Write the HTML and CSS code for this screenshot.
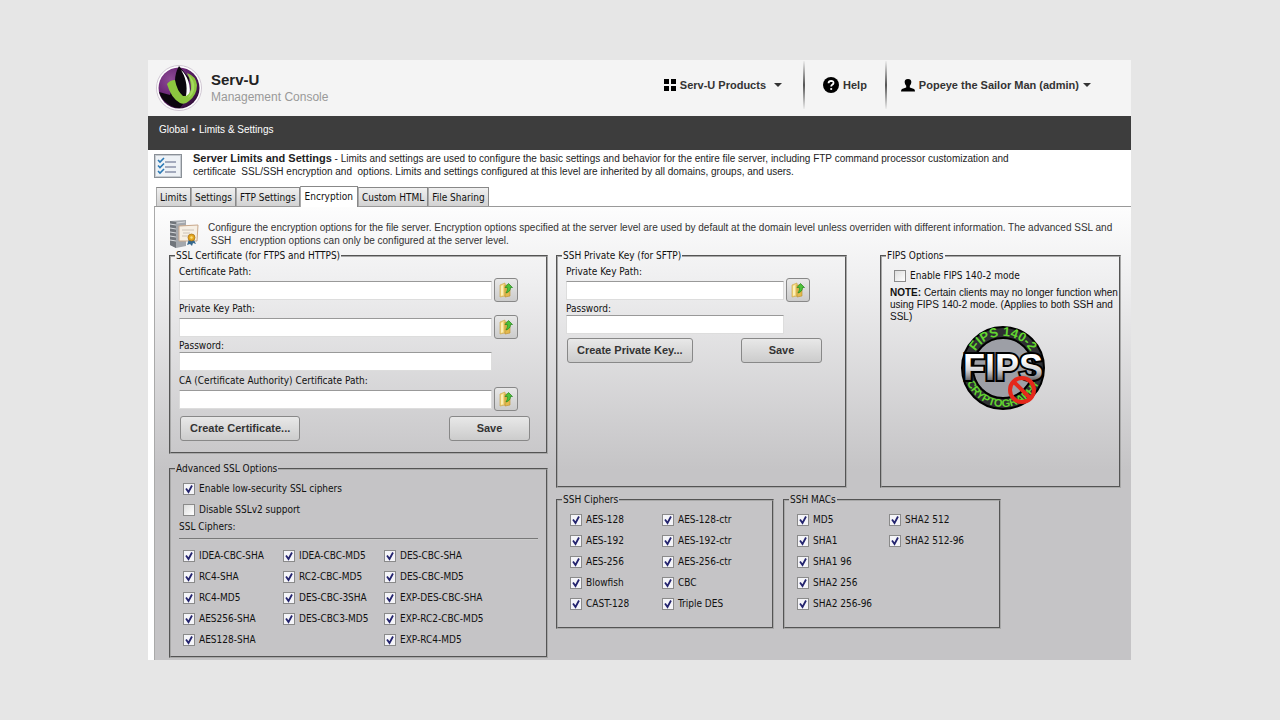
FILE: index.html
```html
<!DOCTYPE html>
<html lang="en">
<head>
    <meta charset="UTF-8">
    <meta name="viewport" content="width=device-width, initial-scale=1.0">
    <title>Serv-U Management Console</title>
    <link rel="stylesheet" href="styles.css">
</head>
<body>
    <!-- shared folder icon for the browse buttons -->
    <svg class="sprite" width="0" height="0" aria-hidden="true">
        <symbol id="folder" viewBox="0 0 16 16">
            <path d="M2 3l5-2v13l-5 1z" fill="#f3d77c" stroke="#c9a244" stroke-width=".6"/>
            <path d="M7 3h5v11l-5 1z" fill="#e3b94e" stroke="#b88d2c" stroke-width=".6"/>
            <path d="M3 4l2-1v10l-2 1z" fill="#fbeeb5"/>
            <path d="M10.500 1.500L14.500 5.500H12.500C12.500 8.500 11 10 8 11C9 9 9.500 8 9.300 5.500H7z" fill="#4cc23a" stroke="#23851c" stroke-width=".7"/>
        </symbol>
    </svg>

    <div class="console">
        <header class="header">
            <div class="brand">
                <svg class="logo" viewBox="0 0 46 46" aria-hidden="true">
                    <defs>
                        <radialGradient id="purple" cx=".3" cy=".3" r=".75">
                            <stop offset="0" stop-color="#8f4c96"/>
                            <stop offset=".5" stop-color="#6b2877"/>
                            <stop offset="1" stop-color="#37103f"/>
                        </radialGradient>
                    </defs>
                    <circle cx="23" cy="23" r="22.500" fill="#fff" stroke="#cfc6d2"/>
                    <circle cx="23" cy="23" r="20.500" fill="url(#purple)"/>
                    <path d="M3 27C5 33 8 36 12 39Q17 43 24 43L31 34L33 13Q28 7 23 1Q19 8 19 16L14 30z" fill="#0c060e"/>
                    <path d="M25 5C31 10 36 20 33 34L30 31C32 20 29 11 25 5z" fill="#fff"/>
                    <path d="M11 19Q14 15 19 15Q21 26 27 31Q33 32 35 24Q35 15 31 8Q40 11 41 20Q41 30 33 36Q29 40 24 38Q15 33 11 19z" fill="#8cc63f"/>
                    <path d="M31 9Q40 19 32 33Q36 31 38 25Q40 15 31 9z" fill="#a6d860"/>
                </svg>
                <div>
                    <h1 class="title">Serv-U</h1>
                    <p class="subtitle">Management Console</p>
                </div>
            </div>
            <nav class="menu">
                <button class="menu-item products" type="button">
                    <svg width="12" height="12" viewBox="0 0 12 12" aria-hidden="true"><path d="M0 0h5v5H0zM7 0h5v5H7zM0 7h5v5H0zM7 7h5v5H7z"/></svg>
                    Serv-U Products <span class="caret"></span>
                </button>
                <a class="menu-item help" href="#">
                    <svg width="16" height="16" viewBox="0 0 16 16" aria-hidden="true">
                        <circle cx="8" cy="8" r="8"/>
                        <path d="M5.500 6.200Q5.700 3.800 8.100 3.800Q10.600 3.900 10.500 6Q10.300 7.300 8.900 8Q8.200 8.500 8.200 9.600" fill="none" stroke="#fff" stroke-width="1.800"/>
                        <circle cx="8.200" cy="12" r="1.100" fill="#fff"/>
                    </svg>
                    Help
                </a>
                <button class="menu-item user" type="button">
                    <svg width="14" height="13" viewBox="0 0 14 13" aria-hidden="true"><path d="M7 0C9.600 0 10.600 1.600 10.300 3.500C10.100 5 9.300 6 8.800 6.800V8.500L13 10Q14 10.500 14 12.500H0Q0 10.500 1 10L5.200 8.500V6.800C4.700 6 3.900 5 3.700 3.500C3.400 1.600 4.400 0 7 0z"/></svg>
                    Popeye the Sailor Man (admin) <span class="caret"></span>
                </button>
            </nav>
        </header>

        <div class="crumbs"><a href="#">Global</a> <span>•</span> <a href="#">Limits &amp; Settings</a></div>

        <div class="intro">
            <svg width="28" height="24" viewBox="0 0 28 24" aria-hidden="true">
                <rect x=".5" y=".5" width="27" height="23" fill="#eef2f6" stroke="#8a9097"/>
                <rect x="1.500" y="1.500" width="25" height="21" fill="none" stroke="#c7ccd2"/>
                <path d="M11 8h11M11 13h11M11 18h11" stroke="#8a93ab" stroke-width="1.500"/>
                <path d="M4 6l2 2l4-4M4 11.500l2 2l4-4M4 17l2 2l4-4" fill="none" stroke="#2b79b5" stroke-width="1.600"/>
            </svg>
            <p><b>Server Limits and Settings</b> - Limits and settings are used to configure the basic settings and behavior for the entire file server, including FTP command processor customization and<br>
            certificate &nbsp;SSL/SSH encryption and &nbsp;options. Limits and settings configured at this level are inherited by all domains, groups, and users.</p>
        </div>

        <div class="tabs" role="tablist">
            <button class="tab" type="button" role="tab">Limits</button>
            <button class="tab" type="button" role="tab">Settings</button>
            <button class="tab" type="button" role="tab">FTP Settings</button>
            <button class="tab active" type="button" role="tab" aria-selected="true">Encryption</button>
            <button class="tab" type="button" role="tab">Custom HTML</button>
            <button class="tab" type="button" role="tab">File Sharing</button>
        </div>

        <main class="panel">
            <div class="note">
                <svg width="30" height="30" viewBox="0 0 30 30" aria-hidden="true">
                    <path d="M1 2L17 1V27L7 29L1 26z" fill="#a4a8ad"/>
                    <path d="M1 2L7 3V29L1 26z" fill="#70757b"/>
                    <path d="M1 5l6 1M1 9l6 1M1 13l6 1M1 17l6 1M1 21l6 1M8 4l8-1" stroke="#d9dcdf"/>
                    <path d="M10 7L29 6L28 22L10 22z" fill="#f6efe4" stroke="#c9a88a"/>
                    <path d="M13 11h12M14 14h7M13 17h6" stroke="#c3b8ac" stroke-width=".8"/>
                    <path d="M20 20L18 26L21 25L23 27L24 24L27 25L24 19z" fill="#36688d"/>
                    <circle cx="22.500" cy="18.500" r="3.500" fill="#e3a51f" stroke="#a06c10" stroke-width=".7"/>
                    <circle cx="22.500" cy="18.500" r="1.200" fill="#f9df7c"/>
                </svg>
                <p>Configure the encryption options for the file server. Encryption options specified at the server level are used by default at the domain level unless overriden with different information. The advanced SSL and<br>
                &nbsp;SSH &nbsp; encryption options can only be configured at the server level.</p>
            </div>

            <div class="columns">
                <div class="column">
                    <fieldset class="group">
                        <legend>SSL Certificate (for FTPS and HTTPS)</legend>
                        <label for="certPath">Certificate Path:</label>
                        <div class="path">
                            <input type="text" id="certPath">
                            <button class="browse" type="button" aria-label="Browse"><svg width="16" height="16"><use href="#folder"/></svg></button>
                        </div>
                        <label for="keyPath">Private Key Path:</label>
                        <div class="path">
                            <input type="text" id="keyPath">
                            <button class="browse" type="button" aria-label="Browse"><svg width="16" height="16"><use href="#folder"/></svg></button>
                        </div>
                        <label for="certPass">Password:</label>
                        <div class="path no-browse spaced">
                            <input type="password" id="certPass">
                        </div>
                        <label for="caPath">CA (Certificate Authority) Certificate Path:</label>
                        <div class="path">
                            <input type="text" id="caPath">
                            <button class="browse" type="button" aria-label="Browse"><svg width="16" height="16"><use href="#folder"/></svg></button>
                        </div>
                        <div class="actions">
                            <button class="btn" type="button">Create Certificate...</button>
                            <button class="btn save" type="button">Save</button>
                        </div>
                    </fieldset>

                    <fieldset class="group advanced">
                        <legend>Advanced SSL Options</legend>
                        <label class="check"><input type="checkbox" checked>Enable low-security SSL ciphers</label>
                        <label class="check"><input type="checkbox">Disable SSLv2 support</label>
                        <p class="ciphers-title">SSL Ciphers:</p>
                        <div class="checks ssl">
                            <div>
                                <label class="check"><input type="checkbox" checked>IDEA-CBC-SHA</label>
                                <label class="check"><input type="checkbox" checked>RC4-SHA</label>
                                <label class="check"><input type="checkbox" checked>RC4-MD5</label>
                                <label class="check"><input type="checkbox" checked>AES256-SHA</label>
                                <label class="check"><input type="checkbox" checked>AES128-SHA</label>
                            </div>
                            <div>
                                <label class="check"><input type="checkbox" checked>IDEA-CBC-MD5</label>
                                <label class="check"><input type="checkbox" checked>RC2-CBC-MD5</label>
                                <label class="check"><input type="checkbox" checked>DES-CBC-3SHA</label>
                                <label class="check"><input type="checkbox" checked>DES-CBC3-MD5</label>
                            </div>
                            <div>
                                <label class="check"><input type="checkbox" checked>DES-CBC-SHA</label>
                                <label class="check"><input type="checkbox" checked>DES-CBC-MD5</label>
                                <label class="check"><input type="checkbox" checked>EXP-DES-CBC-SHA</label>
                                <label class="check"><input type="checkbox" checked>EXP-RC2-CBC-MD5</label>
                                <label class="check"><input type="checkbox" checked>EXP-RC4-MD5</label>
                            </div>
                        </div>
                    </fieldset>
                </div>

                <div class="column">
                    <div class="row top-row">
                        <fieldset class="group ssh-key">
                            <legend>SSH Private Key (for SFTP)</legend>
                            <label for="sshPath">Private Key Path:</label>
                            <div class="path">
                                <input type="text" id="sshPath">
                                <button class="browse" type="button" aria-label="Browse"><svg width="16" height="16"><use href="#folder"/></svg></button>
                            </div>
                            <label for="sshPass">Password:</label>
                            <div class="path no-browse">
                                <input type="password" id="sshPass">
                            </div>
                            <div class="actions">
                                <button class="btn" type="button">Create Private Key...</button>
                                <button class="btn save" type="button">Save</button>
                            </div>
                        </fieldset>

                        <fieldset class="group fips">
                            <legend>FIPS Options</legend>
                            <label class="check"><input type="checkbox">Enable FIPS 140-2 mode</label>
                            <p><b>NOTE:</b> Certain clients may no longer function when<br>using FIPS 140-2 mode. (Applies to both SSH and<br>SSL)</p>
                            <svg class="badge" width="86" height="86" viewBox="0 0 86 86">
                                <defs>
                                    <linearGradient id="steel" x1="0" y1="0" x2="0" y2="1">
                                        <stop offset=".3" stop-color="#fff"/>
                                        <stop offset=".55" stop-color="#d8d8da"/>
                                        <stop offset=".8" stop-color="#6c6c70"/>
                                    </linearGradient>
                                    <path id="arcTop" d="M11 43A32 32 0 0 1 75 43"/>
                                    <path id="arcBottom" d="M4 43A39 39 0 0 0 82 43"/>
                                </defs>
                                <circle cx="43" cy="43" r="41" fill="#2f3033" stroke="#000" stroke-width="2"/>
                                <circle cx="43" cy="43" r="30" fill="#9d9fa6" stroke="#000" stroke-width="2"/>
                                <text class="ring-text"><textPath href="#arcTop" startOffset="50%">FIPS 140-2</textPath></text>
                                <text class="ring-text small"><textPath href="#arcBottom" startOffset="50%">CRYPTOGRAPHY</textPath></text>
                                <text class="fips-text" x="43" y="55">FIPS</text>
                                <circle cx="62" cy="65" r="12" fill="none" stroke="#e5281b" stroke-width="4"/>
                                <path d="M54 57L70 73" stroke="#e5281b" stroke-width="4"/>
                            </svg>
                        </fieldset>
                    </div>

                    <div class="row bottom-row">
                        <fieldset class="group">
                            <legend>SSH Ciphers</legend>
                            <div class="checks ssh">
                                <div>
                                    <label class="check"><input type="checkbox" checked>AES-128</label>
                                    <label class="check"><input type="checkbox" checked>AES-192</label>
                                    <label class="check"><input type="checkbox" checked>AES-256</label>
                                    <label class="check"><input type="checkbox" checked>Blowfish</label>
                                    <label class="check"><input type="checkbox" checked>CAST-128</label>
                                </div>
                                <div>
                                    <label class="check"><input type="checkbox" checked>AES-128-ctr</label>
                                    <label class="check"><input type="checkbox" checked>AES-192-ctr</label>
                                    <label class="check"><input type="checkbox" checked>AES-256-ctr</label>
                                    <label class="check"><input type="checkbox" checked>CBC</label>
                                    <label class="check"><input type="checkbox" checked>Triple DES</label>
                                </div>
                            </div>
                        </fieldset>

                        <fieldset class="group">
                            <legend>SSH MACs</legend>
                            <div class="checks ssh">
                                <div>
                                    <label class="check"><input type="checkbox" checked>MD5</label>
                                    <label class="check"><input type="checkbox" checked>SHA1</label>
                                    <label class="check"><input type="checkbox" checked>SHA1 96</label>
                                    <label class="check"><input type="checkbox" checked>SHA2 256</label>
                                    <label class="check"><input type="checkbox" checked>SHA2 256-96</label>
                                </div>
                                <div>
                                    <label class="check"><input type="checkbox" checked>SHA2 512</label>
                                    <label class="check"><input type="checkbox" checked>SHA2 512-96</label>
                                </div>
                            </div>
                        </fieldset>
                    </div>
                </div>
            </div>
        </main>
    </div>
</body>
</html>
```
FILE: styles.css
```css
*{
    box-sizing: border-box;
    margin: 0;
    padding: 0;
}
body{
    padding: 60px 149px 60px 148px;
    background-color: #e6e6e6;
    color: #222;
    font: 10px/13px "DejaVu Sans Condensed", "DejaVu Sans", sans-serif;
}
button, input{
    font: inherit;
    color: inherit;
}
a{
    color: inherit;
    text-decoration: none;
}
.sprite{
    display: block;
}
.console{
    display: flex;
    flex-direction: column;
    min-height: calc(100vh - 120px);
    background-color: #fff;
}

/* header */
.header{
    display: flex;
    justify-content: space-between;
    height: 56px;
    padding: 0 40px 0 8px;
    background-color: #f4f4f4;
    font-family: "Liberation Sans", Arial, sans-serif;
}
.brand{
    display: flex;
    align-items: center;
    gap: 9px;
}
.logo{
    width: 46px;
    height: 46px;
}
.title{
    padding-top: 1px;
    font-size: 15px;
    line-height: 18px;
    color: #222;
}
.subtitle{
    font-size: 12px;
    line-height: 17px;
    color: #999;
}
.menu{
    display: flex;
    align-items: flex-start;
    padding-top: 1px;
}
.menu-item{
    display: flex;
    align-items: center;
    height: 48px;
    gap: 4px;
    border: 0;
    background: none;
    font-size: 11px;
    font-weight: bold;
    color: #333;
}
.menu-item svg{
    fill: #000;
}
.products{
    padding-right: 21px;
}
.products .caret{
    margin-left: 4px;
}
.help{
    padding: 0 18px;
    border-left: 2px solid;
    border-right: 2px solid;
    border-image: linear-gradient(#f4f4f4, #555 50%, #f4f4f4) 1;
}
.user{
    padding-left: 14px;
}
.caret{
    border: 4px solid transparent;
    border-top-color: #333;
    border-bottom: 0;
}
.crumbs{
    height: 34px;
    padding: 7px 11px;
    background-color: #3d3d3d;
    color: #fff;
    font: 10px/13px "Liberation Sans", Arial, sans-serif;
}
.crumbs span{
    margin: 0 1px;
}

/* page description */
.intro{
    display: flex;
    gap: 11px;
    padding: 2px 6px 8px;
    font: 10px/13px "Liberation Sans", Arial, sans-serif;
}
.intro b{
    font-size: 11px;
}
.intro svg{
    flex: none;
    margin-top: 2px;
}

/* tabs, the active one covers the panel border */
.tabs{
    display: flex;
    align-items: flex-end;
    height: 20px;
    padding-left: 8px;
}
.tab{
    height: 19px;
    padding: 0 3px;
    border: 1px solid #888;
    border-left-color: #aaa;
    border-bottom: 0;
    background: linear-gradient(#f0f0f0, #d2d2d2);
    color: #111;
}
.tab.active{
    z-index: 1;
    height: 21px;
    margin-bottom: -1px;
    padding: 0 4px 2px;
    background: #fff;
}
.panel{
    flex: 1;
    margin-left: 6px;
    padding: 12px 10px 2px 14px;
    border-top: 1px solid #999;
    border-left: 1px solid #aaa;
    background: linear-gradient(#fdfdfd, #f0f0f1 15%, #c5c4c6 58%);
}
.note{
    display: flex;
    gap: 9px;
    height: 30px;
    color: #333;
    font: 10px/13px "Liberation Sans", Arial, sans-serif;
}
.note svg{
    flex: none;
}
.note p{
    padding-top: 2px;
    white-space: nowrap;
}

/* option groups */
.columns{
    display: grid;
    grid-template-columns: 379fr 565fr;
    gap: 8px;
}
.column{
    display: flex;
    flex-direction: column;
    gap: 8px;
    min-width: 0;
}
.row{
    display: grid;
}
.top-row{
    grid-template-columns: 291fr 241fr;
    gap: 33px;
    min-height: 239px;
}
.bottom-row{
    grid-template-columns: 218fr 218fr 111fr;
    gap: 9px;
    margin-top: -3px;
}
.group{
    min-width: 0;
    padding: 3px 8px 11px;
    border: 2px groove #a8a8a8;
    color: #111;
}
legend{
    margin-left: -4px;
    padding: 0 1px;
}
.group > label{
    display: block;
}
.path{
    display: flex;
    align-items: center;
    gap: 2px;
    height: 24px;
    padding-right: 20px;
}
.path input{
    flex: 1;
    min-width: 0;
    height: 19px;
    padding: 0 3px;
    border: 1px solid #ddd;
    border-top-color: #999;
    background-color: #fff;
}
.path.no-browse{
    height: 19px;
    padding-right: 46px;
}
.path.spaced{
    margin-bottom: 3px;
}
.browse{
    display: flex;
    align-items: center;
    justify-content: center;
    width: 24px;
    height: 24px;
    border: 1px solid #888;
    border-radius: 3px;
    background: linear-gradient(#e8e8e8, #ccc);
}
.actions{
    display: flex;
    justify-content: space-between;
    padding: 5px 8px 0 1px;
}
.btn{
    height: 25px;
    padding: 0 9px;
    border: 1px solid #888;
    border-radius: 3px;
    background: linear-gradient(#e8e8e8, #ccc);
    color: #333;
    font: bold 11px/13px "Liberation Sans", Arial, sans-serif;
}
.save{
    width: 81px;
}
.ssh-key .path{
    padding-right: 27px;
}
.ssh-key .no-browse{
    padding-right: 53px;
}
.ssh-key .actions{
    padding: 4px 15px 0 1px;
}

/* check boxes */
.group .check{
    display: flex;
    align-items: center;
    gap: 4px;
    height: 21px;
    padding-left: 4px;
    white-space: nowrap;
}
.check input{
    appearance: none;
    flex: none;
    width: 12px;
    height: 12px;
    border: 1px solid #8a8a8a;
    background: linear-gradient(135deg, #ddd, #fff);
}
.check input:checked{
    background: #f4f4f8 url("data:image/svg+xml,%3Csvg xmlns='http://www.w3.org/2000/svg' viewBox='0 0 10 10'%3E%3Cpath d='M2 4.500L4.500 8L8 1.500' fill='none' stroke='%2323236e' stroke-width='1.800'/%3E%3C/svg%3E");
}
.checks{
    display: grid;
}
.advanced{
    padding-bottom: 6px;
}
.ciphers-title{
    height: 20px;
    margin-bottom: 5px;
    border-bottom: 2px groove #ccc;
}
.ssl{
    grid-template-columns: 100fr 101fr 158fr;
}
.ssh{
    grid-template-columns: 92fr 106fr;
    padding-bottom: 2px;
}
.fips{
    padding-right: 4px;
}
.fips p{
    padding: 1px 0 2px;
    font: 10px/12px "Liberation Sans", Arial, sans-serif;
    white-space: nowrap;
}
.badge{
    display: block;
    margin: 0 auto;
    font-family: "Liberation Sans", Arial, sans-serif;
    font-weight: bold;
    text-anchor: middle;
}
.ring-text{
    fill: #62d62f;
    font-size: 13px;
}
.ring-text.small{
    font-size: 11px;
}
.fips-text{
    fill: url(#steel);
    stroke: #000;
    stroke-width: 4px;
    paint-order: stroke;
    font-size: 36px;
}
```
